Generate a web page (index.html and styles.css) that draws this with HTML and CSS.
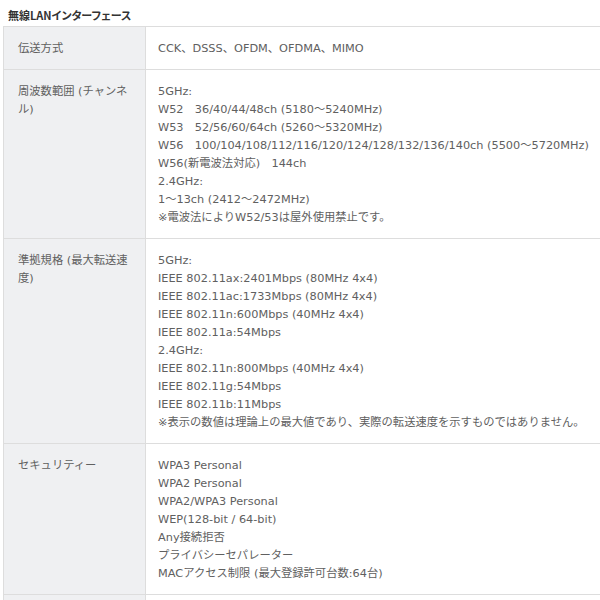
FILE: index.html
```html
<!DOCTYPE html>
<html lang="ja">
<head>
  <meta charset="UTF-8" />
  <title>無線LANインターフェース</title>
  <link rel="stylesheet" href="styles.css">
</head>
<body>
  <h3 class="spec-title">無線LANインターフェース</h3>
  <table class="spec-table">
    <tr>
      <th>伝送方式</th>
      <td>CCK、DSSS、OFDM、OFDMA、MIMO</td>
    </tr>
    <tr>
      <th>周波数範囲 (チャンネル)</th>
      <td>
        5GHz:<br>
        W52　36/40/44/48ch (5180〜5240MHz)<br>
        W53　52/56/60/64ch (5260〜5320MHz)<br>
        W56　100/104/108/112/116/120/124/128/132/136/140ch (5500〜5720MHz)<br>
        W56(新電波法対応)　144ch<br>
        2.4GHz:<br>
        1〜13ch (2412〜2472MHz)<br>
        ※電波法によりW52/53は屋外使用禁止です。
      </td>
    </tr>
    <tr>
      <th>準拠規格 (最大転送速度)</th>
      <td>
        5GHz:<br>
        IEEE 802.11ax:2401Mbps (80MHz 4x4)<br>
        IEEE 802.11ac:1733Mbps (80MHz 4x4)<br>
        IEEE 802.11n:600Mbps (40MHz 4x4)<br>
        IEEE 802.11a:54Mbps<br>
        2.4GHz:<br>
        IEEE 802.11n:800Mbps (40MHz 4x4)<br>
        IEEE 802.11g:54Mbps<br>
        IEEE 802.11b:11Mbps<br>
        ※表示の数値は理論上の最大値であり、実際の転送速度を示すものではありません。
      </td>
    </tr>
    <tr>
      <th>セキュリティー</th>
      <td>
        WPA3 Personal<br>
        WPA2 Personal<br>
        WPA2/WPA3 Personal<br>
        WEP(128-bit / 64-bit)<br>
        Any接続拒否<br>
        プライバシーセパレーター<br>
        MACアクセス制限 (最大登録許可台数:64台)
      </td>
    </tr>
    <tr>
      <th>&nbsp;</th>
      <td>&nbsp;</td>
    </tr>
  </table>
</body>
</html>
```

FILE: styles.css
```css
:root {
  --text: #606060;
  --title: #333333;
  --label-bg: #eff0f2;
  --border: #dddddd;
}

html, body {
  margin: 0;
  padding: 0;
  overflow: hidden;
  background: #ffffff;
}

body {
  font-family: "DejaVu Sans", "Noto Sans CJK JP", sans-serif;
  font-size: 11.3px;
  line-height: 18px;
  color: var(--text);
}

.spec-title {
  margin: 0;
  padding: 7px 8px 3px;
  font-family: "Noto Sans CJK JP", sans-serif;
  font-size: 11px;
  line-height: 16px;
  font-weight: bold;
  font-feature-settings: "palt";
  color: var(--title);
}

.spec-table {
  margin-left: 3px;
  width: 620px;
  border-collapse: collapse;
  table-layout: fixed;
}

.spec-table th,
.spec-table td {
  border: 1px solid var(--border);
  padding: 13px 14px 11px;
  text-align: left;
  vertical-align: top;
  font-weight: normal;
}

.spec-table th {
  width: 113px;
  background: var(--label-bg);
}

.spec-table td {
  padding-left: 12px;
  white-space: nowrap;
}
```
